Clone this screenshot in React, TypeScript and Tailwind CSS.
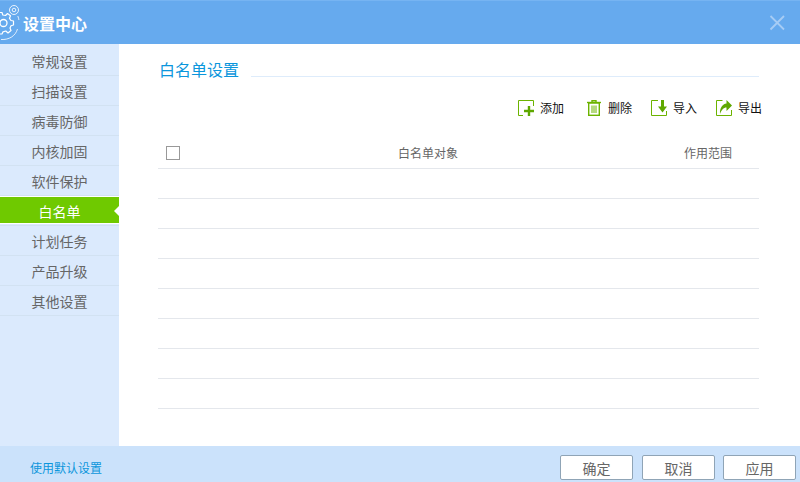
const menuItems = ["常规设置", "扫描设置", "病毒防御", "内核加固", "软件保护", "白名单", "计划任务", "产品升级", "其他设置"];
const emptyRows = [0, 1, 2, 3, 4, 5, 6, 7];

function GearLogo() {
  return (
    <svg width="30" height="40" viewBox="0 0 30 40" fill="none" stroke="#ffffff" className="shrink-0">
      <path d="M1 36.500 C9 37 15.500 33 17.500 26 M17.800 13 C18.500 14.500 18.800 16 18.900 17" strokeWidth="1" opacity="0.8" />
      <circle cx="3.500" cy="20" r="3.500" strokeWidth="1.300" />
      <path
        d="M-1 9.500 L2 9.500 L2.800 12 L5.500 12.500 L7.500 10.500 L10.500 12.800 L9.500 15.300 L11 17.500 L13.500 18 L13.500 22 L11 22.800 L10 25 L11 27.500 L8 30 L5.800 28 L3 28.800 L2 31 L-1 31"
        strokeWidth="1.200"
        strokeLinejoin="round"
      />
      <circle cx="14" cy="7" r="4.500" strokeWidth="1" opacity="0.85" />
      <circle cx="14" cy="7" r="1.800" strokeWidth="1" opacity="0.85" />
    </svg>
  );
}

function AddIcon() {
  return (
    <svg width="16" height="16" viewBox="0 0 16 16" fill="none">
      <path d="M5 15.500 H0.500 V0.500 H15.500 V6" stroke="#6cb300" />
      <path d="M11 6 V16 M6 11 H16" stroke="#5fa800" strokeWidth="2.400" />
    </svg>
  );
}

function TrashIcon() {
  return (
    <svg width="14" height="16" viewBox="0 0 14 16" fill="none">
      <path d="M0 2.500 H14" stroke="#6cb300" strokeWidth="1.400" />
      <path d="M5 2 V0.700 H9 V2" stroke="#6cb300" strokeWidth="1.400" />
      <rect x="1.700" y="3" width="10.600" height="12.300" stroke="#6cb300" strokeWidth="1.400" />
      <path d="M5 5.500 V13 M7 5.500 V13 M9 5.500 V13" stroke="#6cb300" />
    </svg>
  );
}

function ImportIcon() {
  return (
    <svg width="16" height="16" viewBox="0 0 16 16" fill="none">
      <path d="M7 0.500 H0.500 V15.500 H15.500 V11" stroke="#6cb300" />
      <path d="M10 0 H13 V6.500 H16 L11.500 12.500 L7 6.500 H10 Z" fill="#5fa800" />
    </svg>
  );
}

function ExportIcon() {
  return (
    <svg width="16" height="16" viewBox="0 0 16 16" fill="none">
      <path d="M6.500 0.500 H0.500 V15.500 H15.500 V10" stroke="#6cb300" />
      <path d="M4 14 C3.500 8 6.500 4 10.500 3.500 V0 L16 5.500 L10.500 11 V7.500 C7.500 7.500 5.500 10 4 14 Z" fill="#5fa800" />
    </svg>
  );
}

function ToolButton({ icon, label, className }: { icon: React.ReactNode; label: string; className?: string }) {
  return (
    <div className={`flex items-center gap-[6px] ${className ?? ""}`}>
      {icon}
      <span className="text-xs leading-4 text-[#111111]">{label}</span>
    </div>
  );
}

export default function App() {
  return (
    <div className="flex h-[482px] w-[800px] flex-col overflow-hidden bg-white font-['Noto_Sans_CJK_SC','Liberation_Sans',sans-serif]">
      <header className="flex h-[44px] shrink-0 items-center border-t border-[#76b4f2] bg-[#66aaee]">
        <GearLogo />
        <span className="-ml-[7px] text-base font-bold text-white">设置中心</span>
        <svg width="16" height="16" viewBox="0 0 16 16" className="ml-auto mr-[15px] text-[#a6ccf5]" stroke="currentColor" strokeWidth="1.800">
          <path d="M1.500 1 L15 14.500 M15 1 L1.500 14.500" />
        </svg>
      </header>

      <div className="flex min-h-0 flex-1">
        <nav className="flex w-[119px] shrink-0 flex-col bg-[#dbeafd] pt-[2px]">
          {menuItems.map((item) =>
            item === "白名单" ? (
              <div key={item} className="relative h-[30px] border-b border-t border-[#d2e2f2] border-t-white py-0">
                <div className="flex h-[27px] items-center justify-center border-b border-white bg-[#6fc900] pt-px text-sm text-white">{item}</div>
                <span className="absolute right-0 top-[9px] h-0 w-0 border-y-[5px] border-r-[5px] border-y-transparent border-r-white" />
              </div>
            ) : (
              <div key={item} className="flex h-[30px] items-center justify-center border-b border-[#d2e2f2] text-sm text-[#666666]">
                {item}
              </div>
            ),
          )}
        </nav>

        <main className="flex min-w-0 flex-1 flex-col pl-[39px] pr-[41px] pt-[14px]">
          <div className="flex items-end">
            <h1 className="pl-px text-base leading-[22px] font-normal text-[#0b96dc]">白名单设置</h1>
            <div className="mb-[3px] ml-[12px] h-px flex-1 bg-[#deecfb]" />
          </div>

          <div className="mt-[20px] flex h-[16px] w-[604px] items-center pl-[360px]">
            <ToolButton icon={<AddIcon />} label="添加" />
            <ToolButton icon={<TrashIcon />} label="删除" className="ml-[23px] gap-[7px]" />
            <ToolButton icon={<ImportIcon />} label="导入" className="ml-[19px]" />
            <ToolButton icon={<ExportIcon />} label="导出" className="ml-[19px]" />
          </div>

          <div className="mt-[21px] flex h-[32px] items-center border-b border-[#e4e7ec] pt-px text-xs text-[#666666]">
            <span className="ml-[8px] h-[14px] w-[14px] shrink-0 border border-[#999999] bg-white" />
            <span className="ml-[218px]">白名单对象</span>
            <span className="ml-auto mr-[27px]">作用范围</span>
          </div>
          {emptyRows.map((row) => (
            <div key={row} className="h-[30px] shrink-0 border-b border-[#e4e7ec]" />
          ))}
        </main>
      </div>

      <footer className="flex h-[36px] shrink-0 items-start bg-[#cbe2fb] pl-[30px] pr-[4px] pt-[9px]">
        <span className="mt-[5px] text-xs leading-4 text-[#0b96dc]">使用默认设置</span>
        <button className="ml-auto h-[25px] w-[73px] rounded-[2px] border border-[#8fa4b6] bg-white text-sm leading-none text-[#666666]">确定</button>
        <button className="ml-[9px] h-[25px] w-[73px] rounded-[2px] border border-[#8fa4b6] bg-white text-sm leading-none text-[#666666]">取消</button>
        <button className="ml-[8px] h-[25px] w-[73px] rounded-[2px] border border-[#8fa4b6] bg-white text-sm leading-none text-[#666666]">应用</button>
      </footer>
    </div>
  );
}
